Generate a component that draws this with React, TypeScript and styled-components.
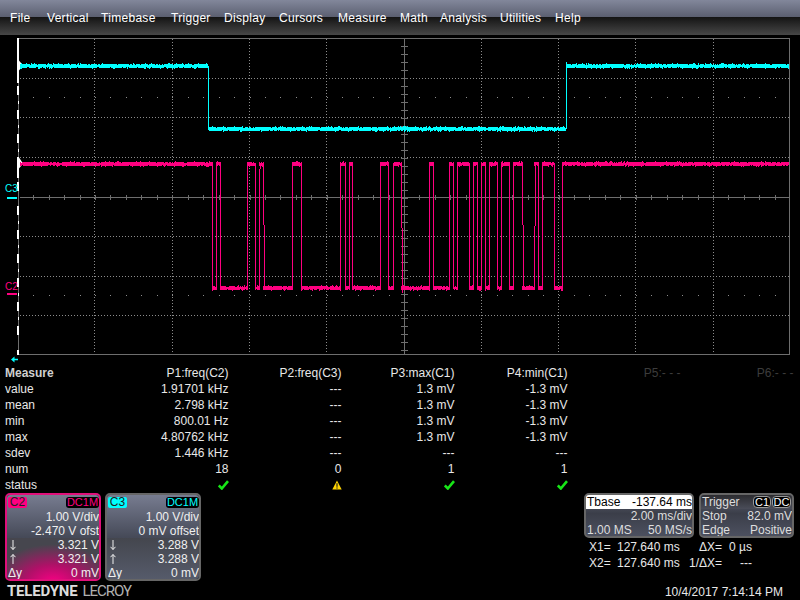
import React from 'react'
import styled, { createGlobalStyle } from 'styled-components'

const CYAN = '#00ffff'
const PINK = '#ff0080'

const GlobalStyle = createGlobalStyle`
  html, body {
    margin: 0;
    padding: 0;
    background: #000;
  }
  body {
    font-family: "Liberation Sans", Arial, sans-serif;
    font-size: 12px;
    color: #fff;
  }
`

const Screen = styled.div`
  width: 800px;
  height: 600px;
  overflow: hidden;
  background: #000;
  display: flex;
  flex-direction: column;
`

const MenuBar = styled.div`
  height: 35px;
  flex: none;
  display: flex;
  align-items: center;
  padding-left: 10px;
  box-sizing: border-box;
  background: linear-gradient(#82879b 0, #5b5f70 17px, #141414 17px, #474747 35px);
`
const MenuItem = styled.span<{ $w: number }>`
  width: ${p => p.$w}px;
  font-size: 12px;
  color: #fff;
  letter-spacing: 0.3px;
`

const ScopeWrap = styled.div`
  position: relative;
  height: 330px;
  flex: none;
`
const ScopeSvg = styled.svg`
  display: block;
  width: 800px;
  height: 330px;
`
const ChannelTag = styled.span<{ $color: string; $top: number }>`
  position: absolute;
  left: 5px;
  top: ${p => p.$top}px;
  font-size: 10px;
  line-height: 10px;
  color: ${p => p.$color};
`

const MeasureGrid = styled.div`
  display: grid;
  grid-template-columns: 110.5px repeat(6, 113px);
  grid-auto-rows: 16px;
  padding-left: 5px;
  flex: none;
  line-height: 16px;
  color: #e8e8e8;
`
const MeasureLabel = styled.div<{ $head?: boolean }>`
  font-weight: ${p => (p.$head ? 700 : 400)};
  color: ${p => (p.$head ? '#d0d0d0' : '#e8e8e8')};
`
const MeasureCell = styled.div<{ $dim?: boolean }>`
  text-align: right;
  white-space: nowrap;
  color: ${p => (p.$dim ? '#3c3c3c' : '#e8e8e8')};
  display: flex;
  justify-content: flex-end;
  align-items: center;
`

const Bottom = styled.div`
  display: flex;
  justify-content: space-between;
  flex: 1;
  padding-left: 5px;
`
const LeftColumn = styled.div`
  display: flex;
  flex-direction: column;
`
const CardRow = styled.div`
  display: flex;
  gap: 4px;
`
const ChannelCard = styled.div<{ $border: string }>`
  width: 96px;
  height: 88px;
  box-sizing: border-box;
  border: 2px solid ${p => p.$border};
  border-radius: 5px;
  overflow: hidden;
  display: flex;
  flex-direction: column;
`
const CardTop = styled.div`
  height: 43px;
  flex: none;
  background: linear-gradient(#777c90, #454957);
`
const CardHeader = styled.div`
  height: 15px;
  display: flex;
  justify-content: space-between;
  align-items: center;
  padding: 0 0 0 1px;
`
const Chip = styled.span<{ $color: string }>`
  width: 19px;
  height: 11px;
  border-radius: 2px;
  background: ${p => p.$color};
  color: #222;
  font-size: 12px;
  line-height: 11px;
  text-align: center;
`
const Coupling = styled.span<{ $color: string }>`
  width: 33px;
  height: 11px;
  border-radius: 3px;
  background: #000;
  color: ${p => p.$color};
  font-size: 11px;
  line-height: 11px;
  text-align: center;
`
const CardLine = styled.div`
  height: 14px;
  line-height: 14px;
  text-align: right;
  white-space: nowrap;
  color: #f0f0f0;
`
const CardBottom = styled.div<{ $pink?: boolean }>`
  flex: 1;
  display: grid;
  grid-auto-rows: 1fr;
  padding-left: 1px;
  background: ${p =>
    p.$pink
      ? `radial-gradient(ellipse 66% 90% at 50% 105%, #f80084 0%, #b01068 45%, rgba(70, 70, 78, 0) 100%), #46464e`
      : `linear-gradient(#44464e, #565b6b)`};
`
const ReadLine = styled.div`
  display: flex;
  justify-content: space-between;
  align-items: center;
  line-height: 14px;
  color: #f0f0f0;
  white-space: nowrap;
`
const ArrowIcon = styled.svg`
  display: block;
  margin-left: 2px;
`
const Logo = styled.div`
  margin: 2px 0 0 2px;
  font-family: Roboto, "Liberation Sans", sans-serif;
  font-size: 15px;
  line-height: 16px;
  white-space: nowrap;
  color: #b0b0b0;
  letter-spacing: -1px;
`
const LogoStrong = styled.span`
  font-weight: 700;
  color: #ddd;
  margin-right: 5px;
  letter-spacing: -0.2px;
`

const RightColumn = styled.div`
  width: 216px;
  display: flex;
  flex-direction: column;
`
const StatusRow = styled.div`
  display: flex;
  gap: 5px;
`
const StatusCard = styled.div<{ $w: number }>`
  width: ${p => p.$w}px;
  height: 45px;
  box-sizing: border-box;
  border: 2px solid #666;
  border-radius: 5px;
  overflow: hidden;
  background: linear-gradient(#5c6172, #3b3e49 45%, #4c505f);
  display: grid;
  grid-template-rows: 14px 14px 13px;
`
const StatusLine = styled.div<{ $head?: boolean; $dark?: boolean }>`
  display: flex;
  justify-content: space-between;
  align-items: center;
  padding: 0 0 0 1px;
  line-height: 14px;
  white-space: nowrap;
  background: ${p => (p.$head ? '#fff' : p.$dark ? 'linear-gradient(#2c2c30, #4a4d59)' : 'transparent')};
  color: ${p => (p.$head ? '#000' : '#dedede')};
`
const SmallChips = styled.span`
  display: flex;
  gap: 1px;
  padding-right: 1px;
`
const SmallChip = styled.span<{ $w: number }>`
  width: ${p => p.$w}px;
  box-sizing: border-box;
  height: 12px;
  line-height: 10px;
  font-size: 11px;
  border: 1px solid #999;
  border-radius: 4px;
  background: #000;
  color: #fff;
  text-align: center;
`
const CursorGrid = styled.div`
  display: grid;
  grid-template-columns: 28px 64px 41px 30px;
  grid-auto-rows: 16px;
  line-height: 16px;
  padding: 1px 0 0 5px;
  color: #e8e8e8;
  white-space: nowrap;
`
const CursorRight = styled.span`
  text-align: right;
`
const DateText = styled.div`
  margin-top: 13px;
  padding-right: 17px;
  line-height: 16px;
  text-align: right;
  color: #e8e8e8;
`

// deterministic noise so the trace stays the same on each render
const makeRandom = (seed: number) => () => {
  seed = (seed * 16807) % 2147483647
  return (seed & 0xffff) / 0xffff
}

const band = (x0: number, x1: number, cy: number, rnd: () => number) => {
  let d = ''
  for (let x = Math.round(x0); x < x1; x++) {
    const up = (rnd() < 0.15 ? 1 : 2) + (rnd() < 0.1 ? 1 : 0)
    const down = (rnd() < 0.15 ? 1 : 2) + (rnd() < 0.1 ? 1 : 0)
    d += `M${x + 0.5} ${cy - up}V${cy + down}`
  }
  return d
}

const HIGH = 163.5
const LOW = 287.5
// pink edges, read as x positions of the zoomed crop, /3 + 190
const EDGES = [
  65, 77, 89, 172, 196, 208, 220, 307, 332, 451, 464, 476, 487, 571, 595, 608, 632, 718, 730, 778, 790, 802, 838, 850, 862, 874,
  886, 898, 922, 934, 958, 970, 995, 1031, 1045, 1057, 1093, 1117,
]
// slow edges that jog one pixel on the way: [kink y, upper part dx, lower part dx]
const KINKS: Record<number, [number, number, number]> = {
  208: [169, 1, 0],
  220: [225, 0, 1],
  632: [228, 0, 1],
  995: [225, 0, 1],
  1031: [226, 1, 0],
}

const pinkTrace = () => {
  const rnd = makeRandom(4711)
  let d = ''
  let level = HIGH
  let from = 20
  for (const z of EDGES) {
    const x = Math.round(190 + z / 3)
    d += band(from, x + 1, level, rnd)
    const kink = KINKS[z]
    if (kink) {
      d += `M${x + kink[1] + 0.5} ${HIGH}V${kink[0]}M${x + kink[2] + 0.5} ${kink[0]}V${z === 632 ? 293 : LOW}`
    } else {
      d += `M${x + 0.5} ${HIGH}V${LOW}`
    }
    level = level === HIGH ? LOW : HIGH
    from = x
  }
  d += band(from, 789, HIGH, rnd)
  return d
}

const cyanTrace = () => {
  const rnd = makeRandom(90210)
  return (
    band(20, 208, 65.5, rnd) +
    'M208.5 66V129' +
    band(208, 566, 128.5, rnd) +
    'M566.5 62V129' +
    band(566, 789, 65.5, rnd)
  )
}

const VERTICALS = [94.5, 172.5, 249.5, 326.5, 481.5, 558.5, 635.5, 713.5]
const HORIZONTALS = [78.5, 117.5, 157.5, 236.5, 276.5, 315.5]

const sideTicks = () => {
  const xs: number[] = []
  for (let k = -25; k <= 24; k++) xs.push(Math.round(404 + k * 15.45) + 0.5)
  return xs.filter(x => x > 19 && x < 789)
}
const XTICKS = sideTicks()
const YTICKS = Array.from({ length: 39 }, (_, i) => 46.5 + i * 8)
const WHITE_LONG = [86, 110, 134, 182, 206, 230, 254, 278, 302, 326]
const WHITE_SHORT = [101, 125, 149, 221, 245, 269, 293, 317]

const Scope = () => (
  <ScopeSvg viewBox="0 35 800 330">
    <g shapeRendering="crispEdges" fill="none">
      <path d="M18.5 38.5H789.5V354.5H18.5Z" stroke="#6e6e6e" />
      {VERTICALS.map(x => (
        <line key={x} x1={x} x2={x} y1={39} y2={354} stroke="#8c8c8c" strokeDasharray="1 2" />
      ))}
      {HORIZONTALS.map(y => (
        <line key={y} x1={20} x2={789} y1={y} y2={y} stroke="#8c8c8c" strokeDasharray="1 2" />
      ))}
      <line x1={20} x2={789} y1={197.5} y2={197.5} stroke="#6e6e6e" />
      <line x1={404.5} x2={404.5} y1={38} y2={354} stroke="#6e6e6e" />
      {XTICKS.map(x => (
        <g key={x}>
          <line x1={x} x2={x} y1={195} y2={200} stroke="#6e6e6e" />
          <rect x={x - 0.5} y={97} width={1} height={1} fill="#8c8c8c" />
          <rect x={x - 0.5} y={295} width={1} height={1} fill="#8c8c8c" />
        </g>
      ))}
      {YTICKS.map(y => (
        <line key={y} x1={401} x2={408} y1={y} y2={y} stroke="#6e6e6e" />
      ))}
      <rect x={17} y={38} width={2} height={45} fill="#fff" />
      <rect x={17} y={157} width={2} height={21} fill="#fff" />
      {WHITE_LONG.map(y => (
        <rect key={y} x={17} y={y} width={2} height={9} fill="#fff" />
      ))}
      {WHITE_SHORT.map(y => (
        <rect key={y} x={18} y={y} width={1} height={3} fill="#fff" />
      ))}
      <rect x={17} y={350} width={2} height={5} fill="#fff" />
    </g>
    <path d="M19 60.5L23 65.5L19 70.5Z" fill="#fff" />
    <path d="M19 157.5L23 163.5L19 168.5Z" fill="#fff" />
    <g shapeRendering="crispEdges" fill="none">
      <path d={pinkTrace()} stroke={PINK} />
      <path d={cyanTrace()} stroke={CYAN} />
      <rect x={7} y={197} width={10} height={2} fill={CYAN} />
      <rect x={7} y={293} width={10} height={2} fill={PINK} />
    </g>
    <path d="M11 359.5L14.5 356.5V358.7H18V360.3H14.5V362.5Z" fill={CYAN} />
  </ScopeSvg>
)

const Check = () => (
  <svg width="11" height="10" viewBox="0 0 11 10">
    <path d="M0.8 5.5L3.8 8.5L10 1.2" fill="none" stroke="#17e617" strokeWidth="2.6" />
  </svg>
)

const Warning = () => (
  <svg width="10" height="10" viewBox="0 0 10 10">
    <path d="M5 0.5L9.7 9.5H0.3Z" fill="#ffd400" />
    <rect x="4.4" y="3.2" width="1.2" height="3.6" fill="#222" />
    <rect x="4.4" y="7.4" width="1.2" height="1.2" fill="#222" />
  </svg>
)

const Arrow = ({ up }: { up?: boolean }) => (
  <ArrowIcon width="6" height="10" viewBox="0 0 6 10">
    <path d={up ? 'M3 0.5V10M0.5 3.2L3 0.5L5.5 3.2' : 'M3 0V9.5M0.5 6.8L3 9.5L5.5 6.8'} fill="none" stroke="#f0f0f0" />
  </ArrowIcon>
)

const MENU: [string, number][] = [
  ['File', 37],
  ['Vertical', 54],
  ['Timebase', 70],
  ['Trigger', 53],
  ['Display', 55],
  ['Cursors', 59],
  ['Measure', 62],
  ['Math', 40],
  ['Analysis', 60],
  ['Utilities', 55],
  ['Help', 40],
]

const HEADS = ['P1:freq(C2)', 'P2:freq(C3)', 'P3:max(C1)', 'P4:min(C1)', 'P5:- - -', 'P6:- - -']
const ROWS: [string, string, string, string, string][] = [
  ['value', '1.91701 kHz', '---', '1.3 mV', '-1.3 mV'],
  ['mean', '2.798 kHz', '---', '1.3 mV', '-1.3 mV'],
  ['min', '800.01 Hz', '---', '1.3 mV', '-1.3 mV'],
  ['max', '4.80762 kHz', '---', '1.3 mV', '-1.3 mV'],
  ['sdev', '1.446 kHz', '---', '---', '---'],
  ['num', '18', '0', '1', '1'],
]

type ChannelProps = {
  name: string
  color: string
  border: string
  offset: string
  down: string
  up: string
  pink?: boolean
}

const Channel = ({ name, color, border, offset, down, up, pink }: ChannelProps) => (
  <ChannelCard $border={border}>
    <CardTop>
      <CardHeader>
        <Chip $color={color}>{name}</Chip>
        <Coupling $color={color}>DC1M</Coupling>
      </CardHeader>
      <CardLine>1.00 V/div</CardLine>
      <CardLine>{offset}</CardLine>
    </CardTop>
    <CardBottom $pink={pink}>
      <ReadLine>
        <Arrow />
        <span>{down}</span>
      </ReadLine>
      <ReadLine>
        <Arrow up />
        <span>{up}</span>
      </ReadLine>
      <ReadLine>
        <span>Δy</span>
        <span>0 mV</span>
      </ReadLine>
    </CardBottom>
  </ChannelCard>
)

export default function App() {
  return (
    <Screen>
      <GlobalStyle />
      <MenuBar>
        {MENU.map(([label, w]) => (
          <MenuItem key={label} $w={w}>
            {label}
          </MenuItem>
        ))}
      </MenuBar>
      <ScopeWrap>
        <Scope />
        <ChannelTag $color={CYAN} $top={149}>
          C3
        </ChannelTag>
        <ChannelTag $color={PINK} $top={247}>
          C2
        </ChannelTag>
      </ScopeWrap>
      <MeasureGrid>
        <MeasureLabel $head>Measure</MeasureLabel>
        {HEADS.map((h, i) => (
          <MeasureCell key={h} $dim={i > 3}>
            {h}
          </MeasureCell>
        ))}
        {ROWS.map(row => (
          <React.Fragment key={row[0]}>
            <MeasureLabel>{row[0]}</MeasureLabel>
            {row.slice(1).map((v, i) => (
              <MeasureCell key={i}>{v}</MeasureCell>
            ))}
            <div />
            <div />
          </React.Fragment>
        ))}
        <MeasureLabel>status</MeasureLabel>
        <MeasureCell>
          <Check />
        </MeasureCell>
        <MeasureCell>
          <Warning />
        </MeasureCell>
        <MeasureCell>
          <Check />
        </MeasureCell>
        <MeasureCell>
          <Check />
        </MeasureCell>
      </MeasureGrid>
      <Bottom>
        <LeftColumn>
          <CardRow>
            <Channel name="C2" color={PINK} border="#e0107a" offset="-2.470 V ofst" down="3.321 V" up="3.321 V" pink />
            <Channel name="C3" color={CYAN} border="#666" offset="0 mV offset" down="3.288 V" up="3.288 V" />
          </CardRow>
          <Logo>
            <LogoStrong>TELEDYNE</LogoStrong>LECROY
          </Logo>
        </LeftColumn>
        <RightColumn>
          <StatusRow>
            <StatusCard $w={110}>
              <StatusLine $head>
                <span>Tbase</span>
                <span>-137.64 ms</span>
              </StatusLine>
              <StatusLine>
                <span />
                <span>2.00 ms/div</span>
              </StatusLine>
              <StatusLine>
                <span>1.00 MS</span>
                <span>50 MS/s</span>
              </StatusLine>
            </StatusCard>
            <StatusCard $w={95}>
              <StatusLine $dark>
                <span>Trigger</span>
                <SmallChips>
                  <SmallChip $w={18}>C1</SmallChip>
                  <SmallChip $w={19}>DC</SmallChip>
                </SmallChips>
              </StatusLine>
              <StatusLine>
                <span>Stop</span>
                <span>82.0 mV</span>
              </StatusLine>
              <StatusLine>
                <span>Edge</span>
                <span>Positive</span>
              </StatusLine>
            </StatusCard>
          </StatusRow>
          <CursorGrid>
            <span>X1=</span>
            <span>127.640 ms</span>
            <CursorRight>ΔX=</CursorRight>
            <CursorRight>0 µs</CursorRight>
            <span>X2=</span>
            <span>127.640 ms</span>
            <CursorRight>1/ΔX=</CursorRight>
            <CursorRight>---</CursorRight>
          </CursorGrid>
          <DateText>10/4/2017 7:14:14 PM</DateText>
        </RightColumn>
      </Bottom>
    </Screen>
  )
}
